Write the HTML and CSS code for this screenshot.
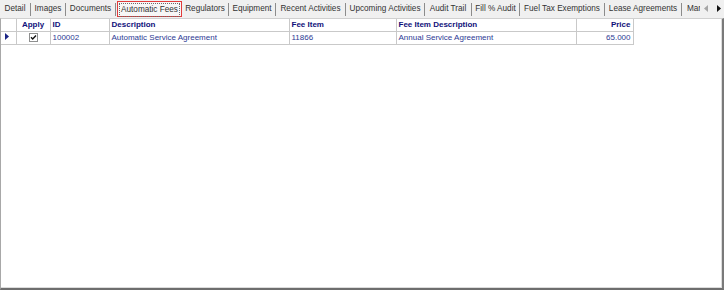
FILE: index.html
```html
<!DOCTYPE html>
<html lang="en">
<head>
  <meta charset="UTF-8" />
  <title>Automatic Fees</title>
  <link rel="stylesheet" href="styles.css">
</head>
<body>
  <div class="tabbar">
    <div class="strip">
      <div class="tab">Detail</div>
      <div class="tab">Images</div>
      <div class="tab">Documents</div>
      <div class="tab active"><span class="focus">Automatic Fees</span></div>
      <div class="tab">Regulators</div>
      <div class="tab">Equipment</div>
      <div class="tab">Recent Activities</div>
      <div class="tab">Upcoming Activities</div>
      <div class="tab">Audit Trail</div>
      <div class="tab">Fill % Audit</div>
      <div class="tab">Fuel Tax Exemptions</div>
      <div class="tab">Lease Agreements</div>
      <div class="tab last">Mar</div>
    </div>
    <div class="scroller">
      <svg class="arrow off" width="4" height="7" viewBox="0 0 4 7"><path d="M4 0 L0 3.5 L4 7 Z" /></svg>
      <svg class="arrow" width="4" height="7" viewBox="0 0 4 7"><path d="M0 0 L4 3.5 L0 7 Z" /></svg>
    </div>
  </div>

  <div class="panel">
    <table class="grid">
      <colgroup>
        <col class="c-sel"><col class="c-apply"><col class="c-id"><col class="c-desc">
        <col class="c-fee"><col class="c-feedesc"><col class="c-price">
      </colgroup>
      <thead>
        <tr>
          <th></th>
          <th class="center">Apply</th>
          <th>ID</th>
          <th>Description</th>
          <th>Fee Item</th>
          <th>Fee Item Description</th>
          <th class="right">Price</th>
        </tr>
      </thead>
      <tbody>
        <tr>
          <td class="selector">
            <svg width="4" height="7" viewBox="0 0 4 7"><path d="M0 0 L4 3.5 L0 7 Z" /></svg>
          </td>
          <td class="center">
            <svg class="check" width="9" height="9" viewBox="0 0 9 9">
              <rect x="0.5" y="0.5" width="8" height="8" fill="#fff" stroke="#8e8f8f" />
              <path d="M2 4.3 L3.7 6 L7 2.6" fill="none" stroke="#111" stroke-width="1.4" />
            </svg>
          </td>
          <td>100002</td>
          <td>Automatic Service Agreement</td>
          <td>11866</td>
          <td>Annual Service Agreement</td>
          <td class="right">65.000</td>
        </tr>
      </tbody>
    </table>
  </div>
</body>
</html>
```

FILE: styles.css
```css
body {
  margin: 0;
  font-family: 'Liberation Sans', Arial, sans-serif;
  background: #f0f0f0;
  width: 724px;
  height: 290px;
  overflow: hidden;
}
.tabbar {
  display: flex;
  height: 18px;
  background: #f0f0f0;
}
.strip {
  display: flex;
  width: 700px;
  overflow: hidden;
  white-space: nowrap;
}
.tab {
  box-sizing: border-box;
  font-size: 8.2px;
  color: #333;
  line-height: 12px;
  text-align: center;
  margin: 3px 0 2px;
  border-right: 1px solid #8c8c8c;
  flex-shrink: 0;
}
/* tab widths follow the label lengths of the original strip */
.tab:nth-child(1) { width: 31px; }
.tab:nth-child(2) { width: 35px; }
.tab:nth-child(3) { width: 50px; }
.tab:nth-child(5) { width: 47px; }
.tab:nth-child(6) { width: 47px; }
.tab:nth-child(7) { width: 70px; }
.tab:nth-child(8) { width: 79px; }
.tab:nth-child(9) { width: 47px; }
.tab:nth-child(10) { width: 48px; }
.tab:nth-child(11) { width: 85px; }
.tab:nth-child(12) { width: 77px; }
.tab.last {
  width: 18px;
  border-right: none;
  text-align: left;
  padding-left: 5px;
  box-sizing: content-box;
}
.tab.active {
  width: 65px;
  margin: 1px 0 1px 1px;
  padding: 1px;
  border: 1px solid #e23b3b;
  background: #f7f7f7;
  line-height: 11px;
}
.tab.active .focus {
  display: block;
  padding-bottom: 1px;
  border: 1px dotted #6a6a6a;
}
.scroller {
  display: flex;
  align-items: center;
  gap: 9px;
  padding: 0 0 1px 4px;
}
.arrow path {
  fill: #111;
}
.arrow.off path {
  fill: #a6a6a6;
}
.panel {
  height: 272px;
  box-sizing: border-box;
  background: #fff;
  border-top: 1px solid #d0d0d0;
  border-left: 1px solid #a8a8a8;
  border-right: 2px solid #7a7a7a;
  border-bottom: 2px solid #6e6e6e;
  box-shadow: inset -1px -1px 0 #dcdcdc;
}
.grid {
  border-collapse: collapse;
  table-layout: fixed;
  width: 632px;
  font-size: 8px;
}
.c-sel { width: 15px; }
.c-apply { width: 34px; }
.c-id { width: 59px; }
.c-desc { width: 180px; }
.c-fee { width: 107px; }
.c-feedesc { width: 180px; }
.c-price { width: 57px; }
.grid th,
.grid td {
  height: 12px;
  padding: 0 2px;
  line-height: 12px;
  border: 1px solid #c9c9c9;
  text-align: left;
  white-space: nowrap;
  overflow: hidden;
}
.grid tr > :first-child {
  border-left: none;
}
.grid thead th {
  border-top: none;
  color: #10107a;
  font-weight: bold;
}
.grid td {
  color: #2c3a94;
}
.grid .center {
  text-align: center;
}
.grid .right {
  text-align: right;
}
.selector {
  padding-left: 4px !important;
}
.selector svg path {
  fill: #1b2586;
}
.check {
  display: inline-block;
  vertical-align: -2px;
}
```
